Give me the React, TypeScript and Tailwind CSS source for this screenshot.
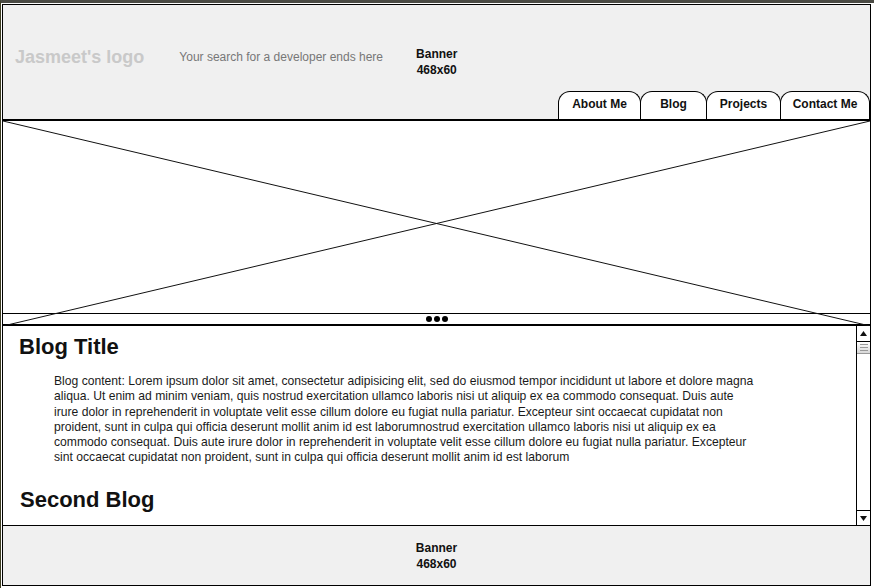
import React from 'react';

const tabs = [
  { label: 'About Me', w: 'w-[83px]' },
  { label: 'Blog', w: 'w-[67px]' },
  { label: 'Projects', w: 'w-[75px]' },
  { label: 'Contact Me', w: 'w-[90px]' },
];

const blogLines = [
  'Blog content: Lorem ipsum dolor sit amet, consectetur adipisicing elit, sed do eiusmod tempor incididunt ut labore et dolore magna',
  'aliqua. Ut enim ad minim veniam, quis nostrud exercitation ullamco laboris nisi ut aliquip ex ea commodo consequat. Duis aute',
  'irure dolor in reprehenderit in voluptate velit esse cillum dolore eu fugiat nulla pariatur. Excepteur sint occaecat cupidatat non',
  'proident, sunt in culpa qui officia deserunt mollit anim id est laborumnostrud exercitation ullamco laboris nisi ut aliquip ex ea',
  'commodo consequat. Duis aute irure dolor in reprehenderit in voluptate velit esse cillum dolore eu fugiat nulla pariatur. Excepteur',
  'sint occaecat cupidatat non proident, sunt in culpa qui officia deserunt mollit anim id est laborum',
];

const Banner: React.FC = () => (
  <div className="text-center text-[12px] font-bold leading-[16px] text-[#111]">
    <div>Banner</div>
    <div>468x60</div>
  </div>
);

const ScrollBar: React.FC = () => (
  <div className="flex w-[14px] shrink-0 flex-col border-l border-black bg-white">
    <div className="flex h-[16px] items-center justify-center border-b border-black">
      <svg width="7" height="5" viewBox="0 0 7 5">
        <path d="M3.5 0 L7 5 L0 5 Z" fill="#111" />
      </svg>
    </div>
    <div className="flex h-[12px] flex-col items-center justify-center gap-[2px] border-b border-[#999] bg-gradient-to-b from-white to-[#d8d8d8]">
      <div className="h-px w-[8px] bg-[#999]" />
      <div className="h-px w-[8px] bg-[#999]" />
      <div className="h-px w-[8px] bg-[#999]" />
    </div>
    <div className="flex-1" />
    <div className="flex h-[15px] items-center justify-center border-t border-black">
      <svg width="7" height="5" viewBox="0 0 7 5">
        <path d="M0 0 L7 0 L3.5 5 Z" fill="#111" />
      </svg>
    </div>
  </div>
);

export default function App() {
  return (
    <div className="h-[588px] w-[874px] overflow-hidden border-l border-t-[3px] border-l-[#3d3d22] border-t-[#4b4b45] bg-white font-['Liberation_Sans',Arial,sans-serif]">
      <div className="ml-px mt-px flex h-[582px] w-[869px] flex-col border border-black">
        {/* header */}
        <div className="flex h-[116px] shrink-0 flex-col border-b-2 border-black bg-[#f0f0f0]">
          <div className="flex h-[86px] items-center pl-[12px] pt-[18px]">
            <div className="text-[18px] font-bold text-[#c9c9c9]">Jasmeet's logo</div>
            <div className="ml-[35px] text-[12px] text-[#777]">Your search for a developer ends here</div>
            <div className="ml-[33px] mt-[10px]">
              <Banner />
            </div>
          </div>
          <div className="flex h-[28px] justify-end">
            {tabs.map((t, i) => (
              <div
                key={t.label}
                className={`${t.w} ${i > 0 ? '-ml-px' : ''} flex items-start justify-center rounded-t-[12px] border border-b-0 border-black bg-white pt-[3px] text-[12px] font-bold text-[#111]`}
              >
                {t.label}
              </div>
            ))}
          </div>
        </div>

        {/* image placeholder + splitter */}
        <div className="relative shrink-0">
          <div className="h-[192px] bg-white" />
          <div className="flex h-[13px] items-center justify-center gap-[2px] border-b-2 border-t border-black bg-white">
            <div className="h-[6px] w-[6px] rounded-full bg-black" />
            <div className="h-[6px] w-[6px] rounded-full bg-black" />
            <div className="h-[6px] w-[6px] rounded-full bg-black" />
          </div>
          <svg className="pointer-events-none absolute inset-0 h-full w-full" viewBox="0 0 867 205" preserveAspectRatio="none">
            <line x1="0" y1="0" x2="867" y2="205" stroke="#111" strokeWidth="1" />
            <line x1="0" y1="205" x2="867" y2="0" stroke="#111" strokeWidth="1" />
          </svg>
        </div>

        {/* content */}
        <div className="flex h-[200px] shrink-0 border-b border-black">
          <div className="flex-1 overflow-hidden pl-[16px]">
            <h1 className="mt-[9px] text-[22px] font-bold leading-[24px] text-[#111]">Blog Title</h1>
            <div className="ml-[35px] mt-[15px] text-[12.15px] leading-[15.25px] text-[#1a1a1a]">
              {blogLines.map((l) => (
                <div key={l} className="whitespace-nowrap">{l}</div>
              ))}
            </div>
            <h2 className="ml-px mt-[22px] text-[22px] font-bold leading-[24px] text-[#111]">Second Blog</h2>
          </div>
          <ScrollBar />
        </div>

        {/* footer */}
        <div className="flex flex-1 items-center justify-center bg-[#f0f0f0]">
          <div className="leading-[15px]">
            <Banner />
          </div>
        </div>
      </div>
    </div>
  );
}
